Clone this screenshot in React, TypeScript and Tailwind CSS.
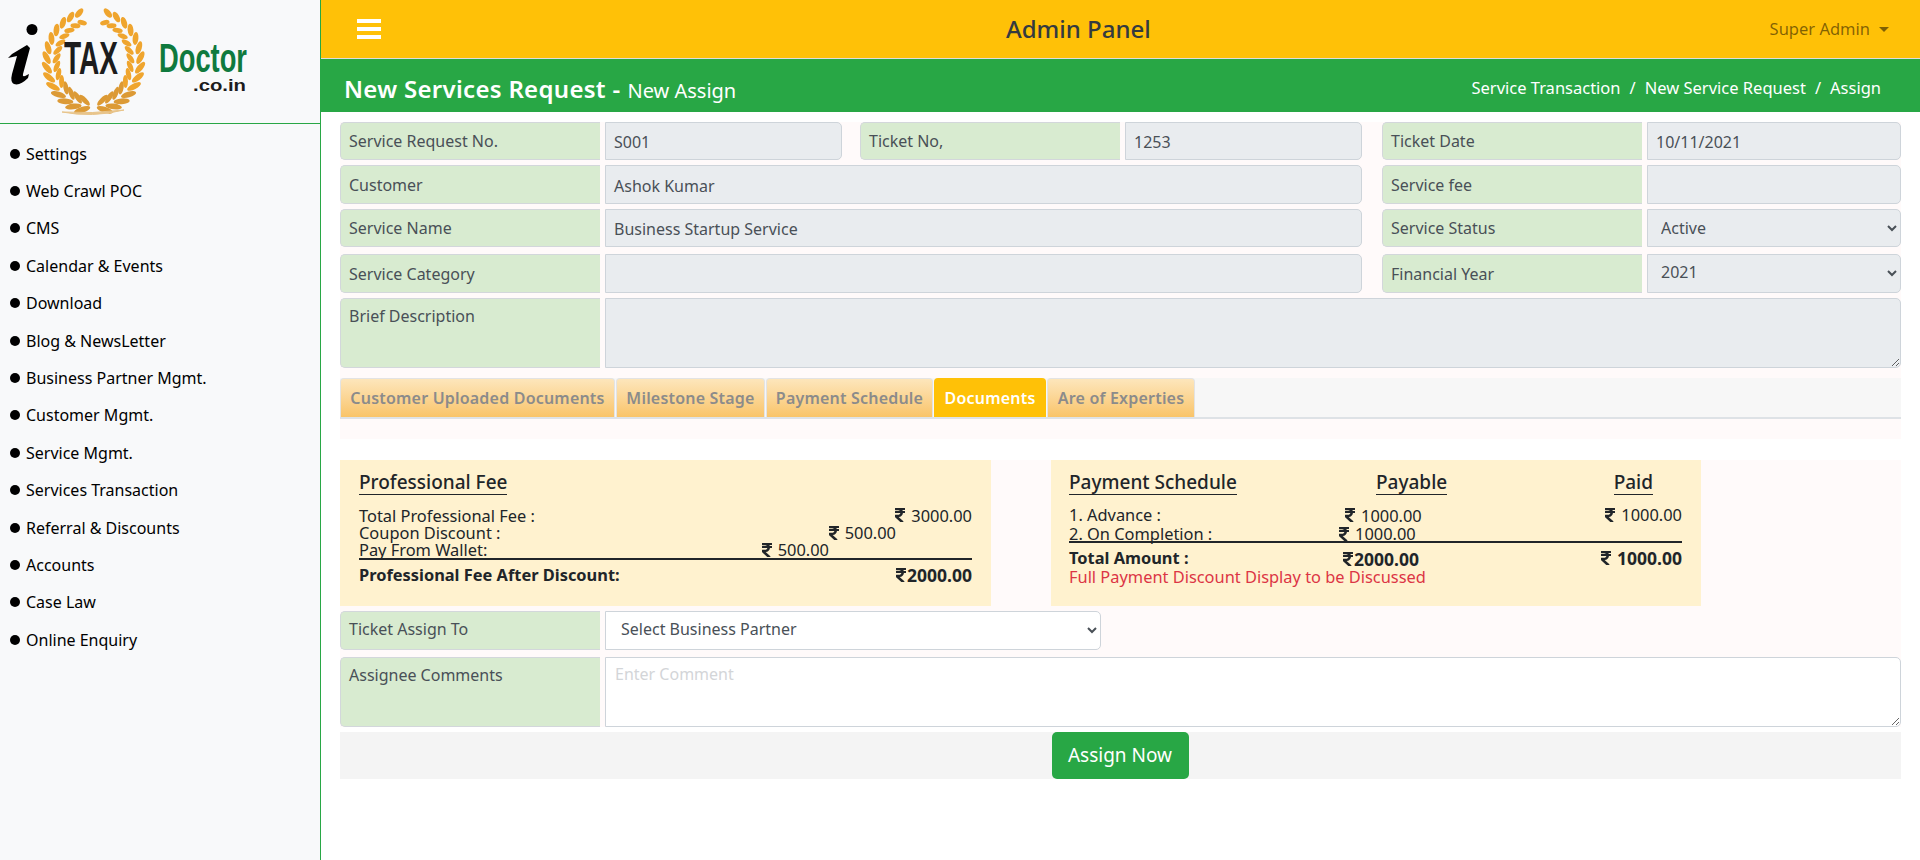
import { FaRupeeSign } from 'react-icons/fa'

const navItems = [
  'Settings',
  'Web Crawl POC',
  'CMS',
  'Calendar & Events',
  'Download',
  'Blog & NewsLetter',
  'Business Partner Mgmt.',
  'Customer Mgmt.',
  'Service Mgmt.',
  'Services Transaction',
  'Referral & Discounts',
  'Accounts',
  'Case Law',
  'Online Enquiry',
]

const tabs = [
  { label: 'Customer Uploaded Documents', width: 'w-[275px]' },
  { label: 'Milestone Stage', width: 'w-[149px]' },
  { label: 'Payment Schedule', width: 'w-[167px]' },
  { label: 'Documents', width: 'w-[112px]', active: true },
  { label: 'Are of Experties', width: 'w-[148px]' },
]

const wreathSteps = [0, 1, 2, 3, 4, 5, 6, 7, 8, 9, 10, 11, 12, 13]

function Branch({ side }: { side: 1 | -1 }) {
  const cx = 93.5
  const cy = 61
  const r = 42
  return (
    <g>
      {wreathSteps.map((i) => {
        // walk up the branch from the bottom of the wreath to the top
        const deg = 14 + i * 11.4
        const rad = (deg * Math.PI) / 180
        const x = cx + side * r * Math.sin(rad)
        const y = cy + r * Math.cos(rad) * 1.08
        const size = 8.5 - i * 0.22
        const tangent = -side * deg
        const fill = i < 4 ? '#dc9a35' : '#efa52e'
        const ox = x + side * 5 * Math.sin(rad)
        const oy = y + 5 * Math.cos(rad)
        const ix = x - side * 5 * Math.sin(rad)
        const iy = y - 5 * Math.cos(rad)
        return (
          <g key={i}>
            <ellipse cx={ox} cy={oy} rx={size} ry={2.9} fill={fill} transform={`rotate(${tangent + side * 32} ${ox} ${oy})`} />
            <ellipse cx={ix} cy={iy} rx={size * 0.85} ry={2.5} fill={fill} transform={`rotate(${tangent - side * 32} ${ix} ${iy})`} />
          </g>
        )
      })}
    </g>
  )
}

function Logo() {
  return (
    <svg width="260" height="123" viewBox="0 0 260 123">
      <circle cx="32" cy="29.5" r="5.5" fill="#000" />
      <path
        d="M8 58 L12 54 L27 45 L30 48 L23 74 Q22 78 27 75 L29 74 L28 78 Q20 86 14 84 Q10 82 12 74 L17 56 Z"
        fill="#000"
      />
      <Branch side={1} />
      <Branch side={-1} />
      <path d="M62 112 Q92 118 124 110 Q92 114 62 112 Z" fill="#e8c48a" stroke="#e8c48a" />
      <text
        x="91"
        y="74"
        textAnchor="middle"
        fontFamily="Liberation Sans, sans-serif"
        fontSize="46"
        fontWeight="700"
        fill="#1c1c1c"
        textLength="54"
        lengthAdjust="spacingAndGlyphs"
      >
        TAX
      </text>
      <text
        x="159"
        y="72"
        fontFamily="Liberation Sans, sans-serif"
        fontSize="40"
        fontWeight="700"
        fill="#0f7a3e"
        textLength="88"
        lengthAdjust="spacingAndGlyphs"
      >
        Doctor
      </text>
      <text
        x="193"
        y="91"
        fontFamily="Liberation Sans, sans-serif"
        fontSize="17"
        fontWeight="700"
        fill="#1c1c1c"
        textLength="53"
        lengthAdjust="spacingAndGlyphs"
      >
        .co.in
      </text>
    </svg>
  )
}

function Label({ children, className = 'h-full items-center' }: { children: React.ReactNode; className?: string }) {
  return (
    <div
      className={`flex w-[260px] shrink-0 rounded-l-[5px] rounded-r-none border border-[#d3d7db] border-r-0 bg-[#d8ebd0] px-[8px] text-[16px] text-[#495057] ${className}`}
    >
      {children}
    </div>
  )
}

function Value({ text, className = '' }: { text?: string; className?: string }) {
  return (
    <div
      className={`flex h-full shrink-0 items-center rounded-[5px] rounded-l-none border border-[#ced4da] bg-[#e9ecef] px-[8px] pt-[2px] text-[16px] text-[#495057] ${className}`}
    >
      {text}
    </div>
  )
}

function Pick({ options, className = '' }: { options: string[]; className?: string }) {
  return (
    <select
      className={`h-full shrink-0 rounded-[5px] rounded-l-none border border-[#ced4da] px-[9px] text-[16px] text-[#495057] ${className}`}
    >
      {options.map((o) => (
        <option key={o}>{o}</option>
      ))}
    </select>
  )
}

function Rs({ value, bold, spaced }: { value: string; bold?: boolean; spaced?: boolean }) {
  return (
    <span className={bold ? 'inline-flex items-center text-[17.5px]' : 'inline-flex items-center'}>
      <FaRupeeSign className={bold && !spaced ? 'mr-0 h-[16px] w-[12px]' : 'mr-[5px] h-[16px] w-[12px]'} />
      {value}
    </span>
  )
}

export default function App() {
  return (
    <div className="flex h-[860px] overflow-hidden bg-white font-['Noto_Sans',sans-serif] text-[16px]">
      <aside className="h-full w-[321px] shrink-0 border-r border-[#28a745] bg-[#f8f9fa]">
        <div className="h-[124px] border-b border-[#28a745]">
          <Logo />
        </div>
        <ul className="pt-[11px]">
          {navItems.map((item) => (
            <li key={item} className="flex h-[37.4px] items-center gap-[6px] pl-[10px] text-black">
              <span className="h-[10px] w-[10px] rounded-full bg-black" />
              {item}
            </li>
          ))}
        </ul>
      </aside>

      <div className="flex min-w-0 flex-1 flex-col">
        <header className="flex h-[59px] items-center justify-between border-b border-[#dddddd] bg-[#ffc107] pr-[31px] pl-[36px]">
          <div className="flex w-[24px] flex-col gap-[3.5px]">
            <span className="h-[4.5px] bg-white" />
            <span className="h-[4.5px] bg-white" />
            <span className="h-[4.5px] bg-white" />
          </div>
          <h1 className="ml-[625px] text-[24px] font-medium text-[#343a40]">Admin Panel</h1>
          <div className="ml-auto flex items-center gap-[9px] text-[16.5px] text-[rgba(0,0,0,0.5)]">
            Super Admin
            <span className="h-0 w-0 border-x-[5px] border-t-[5px] border-x-transparent border-t-[rgba(0,0,0,0.5)]" />
          </div>
        </header>

        <div className="flex h-[53px] items-center justify-between bg-[#28a745] pr-[39px] pl-[23px] text-white">
          <div className="mt-[7px] flex items-baseline">
            <span className="text-[24px] font-semibold tracking-[0.3px]">New Services Request -</span>
            <span className="ml-[7px] text-[20px]">New Assign</span>
          </div>
          <div className="mt-[5px] flex gap-[9px] text-[16.5px]">
            <span>Service Transaction</span>
            <span>/</span>
            <span>New Service Request</span>
            <span>/</span>
            <span>Assign</span>
          </div>
        </div>

        <main className="flex flex-col px-[19px] pt-[10px]">
          <section className="flex flex-col bg-[#fffafa]">
            <div className="flex h-[38px] gap-[5px]">
              <Label>Service Request No.</Label>
              <Value text="S001" className="w-[237px]" />
              <div className="ml-[13px] flex h-full gap-[5px]">
                <Label>Ticket No,</Label>
                <Value text="1253" className="w-[237px]" />
              </div>
              <div className="ml-[15px] flex h-full gap-[5px]">
                <Label>Ticket Date</Label>
                <Value text="10/11/2021" className="w-[254px]" />
              </div>
            </div>
            <div className="mt-[5px] flex h-[39px] gap-[5px]">
              <Label>Customer</Label>
              <Value text="Ashok Kumar" className="w-[757px]" />
              <div className="ml-[15px] flex h-full gap-[5px]">
                <Label>Service fee</Label>
                <Value className="w-[254px]" />
              </div>
            </div>
            <div className="mt-[5px] flex h-[38px] gap-[5px]">
              <Label>Service Name</Label>
              <Value text="Business Startup Service" className="w-[757px]" />
              <div className="ml-[15px] flex h-full gap-[5px]">
                <Label>Service Status</Label>
                <Pick options={['Active']} className="w-[254px] bg-[#e9ecef]" />
              </div>
            </div>
            <div className="mt-[7px] flex h-[39px] gap-[5px]">
              <Label>Service Category</Label>
              <Value className="w-[757px]" />
              <div className="ml-[15px] flex h-full gap-[5px]">
                <Label>Financial Year</Label>
                <Pick options={['2021']} className="w-[254px] bg-[#e9ecef] pb-[3px]" />
              </div>
            </div>
            <div className="mt-[5px] flex h-[70px] gap-[5px]">
              <Label className="h-full items-start pt-[5px]">Brief Description</Label>
              <textarea
                readOnly
                className="h-full flex-1 rounded-[5px] rounded-l-none border border-[#ced4da] bg-[#e9ecef]"
              />
            </div>

            <div className="mt-[10px] flex h-[41px] gap-[1px] border-b-2 border-[#dee2e6] bg-[#f7f7f7] tracking-[0.2px]">
              {tabs.map((tab) => (
                <div
                  key={tab.label}
                  className={
                    tab.active
                      ? `flex ${tab.width} items-center justify-center rounded-t-[4px] bg-[#ffc107] font-semibold text-white`
                      : `flex ${tab.width} items-center justify-center rounded-t-[4px] border border-b-0 border-[#e3e3e3] bg-gradient-to-b from-[#fde6bb] to-[#f9c468] font-semibold text-[#8b8b8b]`
                  }
                >
                  {tab.label}
                </div>
              ))}
            </div>
            <div className="h-[20px]" />
          </section>

          <div className="h-[21px]" />

          <section className="flex flex-col bg-[#fffafa]">
            <div className="flex h-[146px] gap-[60px]">
              <div className="w-[651px] bg-[#fff2cf] px-[19px] pt-[10px] text-[16.4px] text-[#212529]">
                <h3 className="inline-block border-b border-[#212529] text-[19px] leading-[24px] font-medium">
                  Professional Fee
                </h3>
                <div className="mt-[11px] leading-[17.3px]">
                  <div className="flex justify-between">
                    <span>Total Professional Fee :</span>
                    <Rs value="3000.00" />
                  </div>
                  <div className="flex justify-between pr-[76px]">
                    <span>Coupon Discount :</span>
                    <Rs value="500.00" />
                  </div>
                  <div className="flex justify-between pr-[143px]">
                    <span>Pay From Wallet:</span>
                    <Rs value="500.00" />
                  </div>
                </div>
                <div className="mt-[-1px] flex justify-between border-t-2 border-[#212529] pt-[4px] leading-[22px] font-bold">
                  <span>Professional Fee After Discount:</span>
                  <Rs value="2000.00" bold />
                </div>
              </div>

              <div className="w-[650px] bg-[#fff2cf] pt-[10px] pr-[19px] pl-[18px] text-[16.4px] text-[#212529]">
                <div className="flex text-[19px] leading-[24px] font-medium">
                  <h3 className="w-[307px] shrink-0">
                    <span className="inline-block border-b border-[#212529]">Payment Schedule</span>
                  </h3>
                  <span className="inline-block border-b border-[#212529]">Payable</span>
                  <span className="mr-[29px] ml-auto inline-block border-b border-[#212529]">Paid</span>
                </div>
                <div className="mt-[11px] leading-[17.3px]">
                  <div className="flex">
                    <span className="w-[275px] shrink-0">1. Advance :</span>
                    <Rs value="1000.00" />
                    <span className="ml-auto">
                      <Rs value="1000.00" />
                    </span>
                  </div>
                  <div className="flex">
                    <span className="w-[269px] shrink-0">2. On Completion :</span>
                    <Rs value="1000.00" />
                  </div>
                </div>
                <div className="mt-[-1px] flex border-t-2 border-[#212529] pt-[6px] leading-[18px] font-bold">
                  <span className="w-[273px] shrink-0">Total Amount :</span>
                  <Rs value="2000.00" bold />
                  <span className="ml-auto">
                    <Rs value="1000.00" bold spaced />
                  </span>
                </div>
                <div className="mt-[-1px] leading-[18px] text-[#dc3545]">Full Payment Discount Display to be Discussed</div>
              </div>
            </div>

            <div className="mt-[5px] flex h-[39px] gap-[5px]">
              <Label className="h-full items-center pb-[3px]">Ticket Assign To</Label>
              <Pick options={['Select Business Partner']} className="w-[496px] bg-white pb-[3px] pl-[11px]" />
            </div>
            <div className="mt-[7px] flex h-[70px] gap-[5px]">
              <Label className="h-full items-start pt-[5px]">Assignee Comments</Label>
              <textarea
                placeholder="Enter Comment"
                className="h-full flex-1 rounded-[5px] rounded-l-none border border-[#ced4da] bg-white px-[9px] py-[4px] placeholder:text-[#d3d5d8]"
              />
            </div>
          </section>

          <div className="mt-[5px] flex h-[47px] justify-center bg-[#f4f4f4]">
            <button className="ml-[-1px] h-full w-[137px] rounded-[5px] bg-[#28a745] text-[19px] text-white">
              Assign Now
            </button>
          </div>
        </main>
      </div>
    </div>
  )
}
